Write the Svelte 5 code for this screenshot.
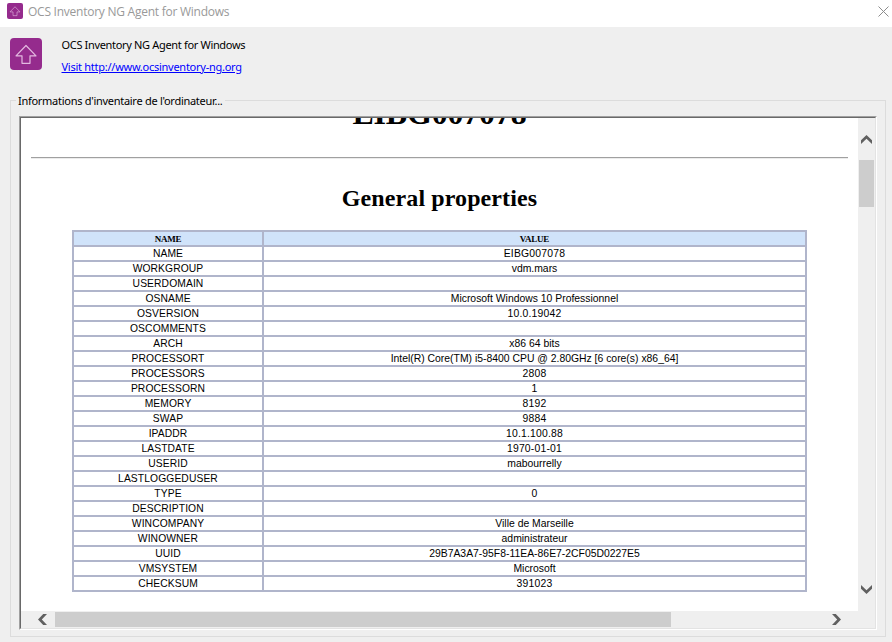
<script>
  const rows = [
    ['NAME', 'EIBG007078'],
    ['WORKGROUP', 'vdm.mars'],
    ['USERDOMAIN', ''],
    ['OSNAME', 'Microsoft Windows 10 Professionnel'],
    ['OSVERSION', '10.0.19042'],
    ['OSCOMMENTS', ''],
    ['ARCH', 'x86 64 bits'],
    ['PROCESSORT', 'Intel(R) Core(TM) i5-8400 CPU @ 2.80GHz [6 core(s) x86_64]'],
    ['PROCESSORS', '2808'],
    ['PROCESSORN', '1'],
    ['MEMORY', '8192'],
    ['SWAP', '9884'],
    ['IPADDR', '10.1.100.88'],
    ['LASTDATE', '1970-01-01'],
    ['USERID', 'mabourrelly'],
    ['LASTLOGGEDUSER', ''],
    ['TYPE', '0'],
    ['DESCRIPTION', ''],
    ['WINCOMPANY', 'Ville de Marseille'],
    ['WINOWNER', 'administrateur'],
    ['UUID', '29B7A3A7-95F8-11EA-86E7-2CF05D0227E5'],
    ['VMSYSTEM', 'Microsoft'],
    ['CHECKSUM', '391023']
  ];
  const isNumeric = (value) => /^[\d.-]+$/.test(value) || value.startsWith('EIBG');
</script>

{#snippet logo(size)}
  <svg width={size} height={size} viewBox="0 0 32 32">
    <rect width="32" height="32" rx="4" fill="#952b8d" />
    <path d="M16 7.5 L26 17.8 H20 V25.3 H12 V17.8 H6 Z" fill="none" stroke="#e3b9e0" stroke-width="1.2" stroke-linejoin="round" />
  </svg>
{/snippet}

<div class="window">
  <header class="titlebar">
    {@render logo(16)}
    <span class="caption">OCS Inventory NG Agent for Windows</span>
    <svg class="close" width="11" height="11" viewBox="0 0 11 11"><path d="M.5 .5 L10.5 10.5 M10.5 .5 L.5 10.5" stroke="#8c8c8c" fill="none" /></svg>
  </header>
  <div class="about">
    {@render logo(32)}
    <div class="about-text">
      <div class="product">OCS Inventory NG Agent for Windows</div>
      <div><span class="link">Visit http://www.ocsinventory-ng.org</span></div>
    </div>
  </div>
  <section class="group">
    <div class="legend"><span>Informations d'inventaire de l'ordinateur...</span></div>
    <div class="sunken">
      <div class="inner">
        <div class="page">
          <h1>EIBG007078</h1>
          <div class="rule"></div>
          <h2>General properties</h2>
          <div class="table">
            <div class="cell head">NAME</div>
            <div class="cell head">VALUE</div>
            {#each rows as [name, value]}
              <div class="cell name">{name}</div>
              <div class="cell" class:numeric={isNumeric(value)}>{value}</div>
            {/each}
          </div>
        </div>
        <div class="vbar">
          <svg width="11" height="9" viewBox="0 0 11 9"><path d="M0 5.2 L5.5 0 L11 5.2 V9 L5.5 3.8 L0 9 Z" fill="#606060" /></svg>
          <div class="vthumb"></div>
          <svg width="11" height="9" viewBox="0 0 11 9"><path d="M0 3.8 L5.5 9 L11 3.8 V0 L5.5 5.2 L0 0 Z" fill="#606060" /></svg>
        </div>
        <div class="hbar">
          <svg width="9" height="11" viewBox="0 0 9 11"><path d="M5.2 0 L0 5.5 L5.2 11 H9 L3.8 5.5 L9 0 Z" fill="#606060" /></svg>
          <div class="hthumb"></div>
          <svg width="9" height="11" viewBox="0 0 9 11"><path d="M3.8 0 L9 5.5 L3.8 11 H0 L5.2 5.5 L0 0 Z" fill="#606060" /></svg>
        </div>
      </div>
    </div>
  </section>
</div>

<style>
  .window, .window * { box-sizing: border-box; }
  .window {
    width: 892px;
    height: 642px;
    background: #efefef;
    overflow: hidden;
    white-space: nowrap;
    font: 11px/14px "Noto Sans", sans-serif;
    color: #000;
  }
  svg { display: block; flex: none; }
  .titlebar {
    height: 27px;
    background: #fff;
    display: flex;
    align-items: flex-start;
    padding: 3px 3px 0 7px;
  }
  .caption {
    margin: 1px 0 0 5px;
    font: 12px/16px "Open Sans", "Noto Sans", sans-serif;
    color: #999;
    letter-spacing: -0.25px;
  }
  .close { margin: 3px 0 0 auto; }
  .about { display: flex; height: 73px; padding: 11px 0 0 10px; }
  .about-text { margin-left: 19.5px; }
  .product { margin-bottom: 8px; letter-spacing: -0.33px; }
  .link { color: #0000ff; text-decoration: underline; letter-spacing: -0.26px; }
  .group {
    width: 876px;
    height: 537px;
    margin-left: 10px;
    border: 1px solid #dcdcdc;
    padding: 0 8px;
  }
  .legend { height: 15px; margin-top: -8px; line-height: 15px; letter-spacing: -0.28px; }
  .legend span { display: inline-block; background: #efefef; margin-left: -3px; padding: 0 2px; }
  .sunken {
    margin-top: 8px;
    width: 858px;
    height: 514px;
    border: 1px solid;
    border-color: #a0a0a0 #fff #fff #a0a0a0;
  }
  .inner {
    height: 512px;
    border: 1px solid;
    border-color: #696969 #e3e3e3 #e3e3e3 #696969;
    display: grid;
    grid-template: 493px 17px / 837px 17px;
    background: #efefef;
  }
  .page { background: #fff; overflow: hidden; padding: 0 10px; }
  h1, h2 { margin: 0; font-family: "Liberation Serif", serif; font-weight: bold; text-align: center; }
  h1 { font-size: 32px; line-height: 36px; height: 62px; margin-top: -23px; letter-spacing: -0.2px; }
  .rule { height: 2px; border-top: 1px solid #a0a0a0; border-bottom: 1px solid #ececec; }
  h2 { font-size: 24px; line-height: 28px; margin-top: 25px; letter-spacing: 0.1px; }
  .table {
    width: 735px;
    margin: 18px 0 0 41px;
    display: grid;
    grid-template-columns: 188px 541px;
    grid-auto-rows: 13px;
    gap: 2px;
    padding: 2px;
    background: #b0b5cb;
  }
  .cell {
    background: #fff;
    text-align: center;
    font: 10.4px/13px "Liberation Sans", Arial, sans-serif;
    height: 13px;
  }
  .name { font-size: 10.3px; letter-spacing: 0.1px; }
  .numeric { letter-spacing: 0.2px; }
  .head { background: #d0e3fa; font: bold 9px/14px "Liberation Serif", serif; letter-spacing: -0.2px; }
  .vbar { display: flex; flex-direction: column; align-items: center; padding: 17px 1px 0 0; }
  .vthumb { width: 15px; height: 47px; margin: 16px 0 378px 1px; background: #cdcdcd; }
  .hbar { display: flex; align-items: center; padding-left: 17px; }
  .hthumb { width: 616px; height: 15px; margin: 0 161px 0 8px; background: #cdcdcd; }
</style>
